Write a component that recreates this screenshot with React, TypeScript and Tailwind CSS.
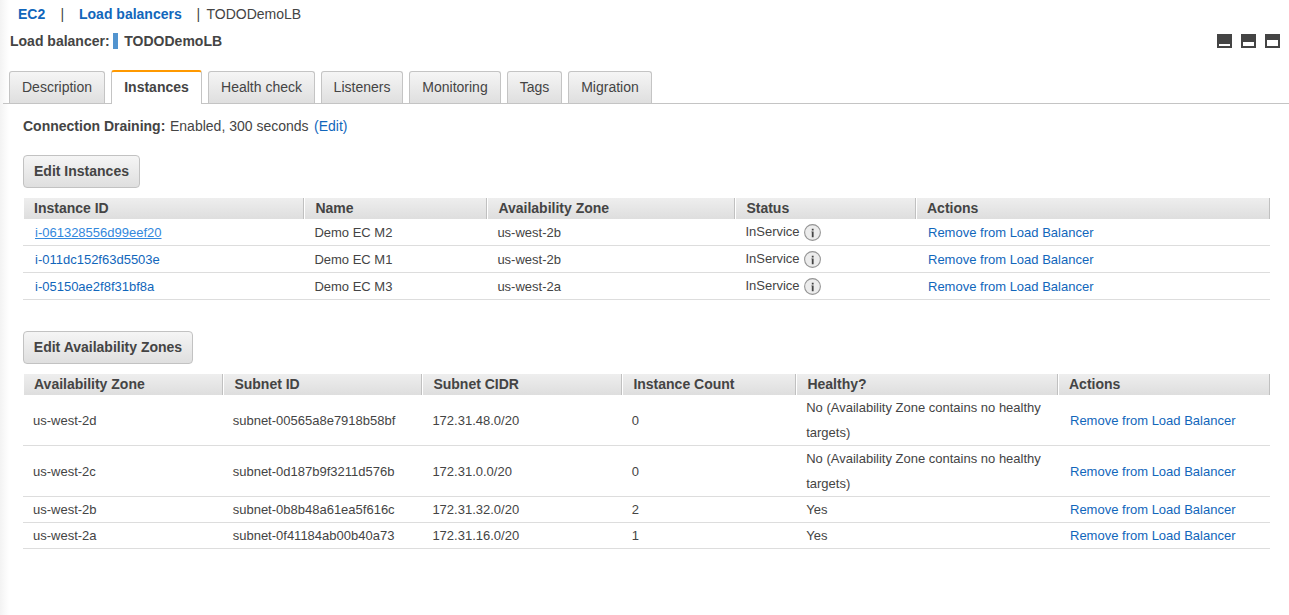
import type { ReactNode } from 'react';

const tabs = [
  { label: 'Description', width: 'w-[96px]' },
  { label: 'Instances', width: 'w-[91px]' },
  { label: 'Health check', width: 'w-[107px]' },
  { label: 'Listeners', width: 'w-[82px]' },
  { label: 'Monitoring', width: 'w-[92px]' },
  { label: 'Tags', width: 'w-[55px]' },
  { label: 'Migration', width: 'w-[84px]' },
];

const instances = [
  { id: 'i-061328556d99eef20', name: 'Demo EC M2', zone: 'us-west-2b', hovered: true },
  { id: 'i-011dc152f63d5503e', name: 'Demo EC M1', zone: 'us-west-2b', hovered: false },
  { id: 'i-05150ae2f8f31bf8a', name: 'Demo EC M3', zone: 'us-west-2a', hovered: false },
];

const unhealthy = 'No (Availability Zone contains no healthy targets)';

const zones = [
  { zone: 'us-west-2d', subnet: 'subnet-00565a8e7918b58bf', cidr: '172.31.48.0/20', count: 0, healthy: unhealthy },
  { zone: 'us-west-2c', subnet: 'subnet-0d187b9f3211d576b', cidr: '172.31.0.0/20', count: 0, healthy: unhealthy },
  { zone: 'us-west-2b', subnet: 'subnet-0b8b48a61ea5f616c', cidr: '172.31.32.0/20', count: 2, healthy: 'Yes' },
  { zone: 'us-west-2a', subnet: 'subnet-0f41184ab00b40a73', cidr: '172.31.16.0/20', count: 1, healthy: 'Yes' },
];

const instanceGrid = 'grid grid-cols-[281px_183px_248px_181px_354px]';
const zoneGrid = 'grid grid-cols-[200px_199px_200px_174px_262px_212px]';

function HeaderRow({ grid, labels }: { grid: string; labels: string[] }) {
  return (
    <div className={`${grid} h-[21px] text-sm leading-[21px] font-bold`}>
      {labels.map((label) => (
        <div
          key={label}
          className="border-r border-l border-r-[#c0c0c0] border-l-white bg-linear-to-b from-[#eeeeee] to-[#dedede] pl-[10.4px] first:pl-[10px] last:pl-[10px]"
        >
          {label}
        </div>
      ))}
    </div>
  );
}

function GreyButton({ children, width }: { children: ReactNode; width: string }) {
  return (
    <button
      className={`${width} block h-[33px] rounded-[4px] border border-[#c2c2c2] bg-linear-to-b from-[#f5f5f5] to-[#dfdfdf] pb-px text-center text-sm font-bold whitespace-nowrap`}
    >
      {children}
    </button>
  );
}

function PaneIcon({ top, height }: { top: number; height: number }) {
  return (
    <svg width="15" height="14" viewBox="0 0 15 14" shapeRendering="crispEdges">
      <rect width="15" height="14" fill="#444" />
      <rect x="2" y={top} width="11" height={height} fill="#fff" />
    </svg>
  );
}

function InfoIcon() {
  return (
    <svg width="18" height="18" viewBox="0 0 18 18">
      <circle cx="8.5" cy="8.5" r="7.9" fill="#ececec" stroke="#959595" strokeWidth="1.1" />
      <path d="M7.8 4.8h1.8v1.8H7.8zM7.8 7.5h1.8v5.8H7.8z" fill="#444" />
      <path d="M7 7.5h.8v.8H7z" fill="#888" />
    </svg>
  );
}

function RemoveLink() {
  return (
    <a href="#" className="text-[#1166bb]">
      Remove from Load Balancer
    </a>
  );
}

export default function App() {
  return (
    <div className="flex h-[615px] w-[1289px] overflow-hidden bg-white font-['Liberation_Sans',Arial,sans-serif] text-sm text-[#444]">
      <div className="w-[9px] shrink-0 bg-linear-to-r from-[#f3f3f3] to-white" />
      <div className="-ml-[6px] flex-1">
        <div className="flex h-[28px] items-center pl-[15px] whitespace-pre">
          <a href="#" className="w-[42.5px] font-bold text-[#1166bb]">EC2</a>
          <span className="w-[18.5px]">|</span>
          <a href="#" className="w-[117.4px] font-bold text-[#1166bb]">Load balancers</a>
          <span className="w-[10.1px]">|</span>
          <span>TODODemoLB</span>
        </div>

        <div className="flex h-[26px] items-center pr-[9px] pl-[7px] font-bold">
          <span className="w-[103px]">Load balancer:</span>
          <span className="mr-[6.3px] h-[16px] w-[5px] bg-[#5294cf]" />
          <span>TODODemoLB</span>
          <div className="ml-auto flex gap-[9px]">
            <PaneIcon top={10} height={2} />
            <PaneIcon top={8} height={4} />
            <PaneIcon top={6} height={6} />
          </div>
        </div>

        <div className="mt-[16px] flex h-[34px] items-end gap-[6px] border-b border-[#c4c4c4] pl-[6px]">
          {tabs.map(({ label, width }) =>
            label === 'Instances' ? (
              <div
                key={label}
                className={`${width} -mb-px h-[34px] shrink-0 rounded-t-[3px] border-x border-t-2 border-x-[#c4c4c4] border-t-[#ff9900] bg-white text-center leading-[31px] font-bold`}
              >
                {label}
              </div>
            ) : (
              <div
                key={label}
                className={`${width} h-[32px] shrink-0 rounded-t-[3px] border-x border-t border-[#c4c4c4] bg-linear-to-b from-[#f5f5f5] to-[#dfdfdf] text-center leading-[31px]`}
              >
                {label}
              </div>
            ),
          )}
        </div>

        <div className="mr-[19px] ml-[20px]">
          <div className="flex h-[51px] pt-[14px] leading-[17px]">
            <span className="w-[147px] font-bold">Connection Draining:</span>
            <span>Enabled, 300 seconds</span>
            <a href="#" className="ml-[5.5px] text-[#1166bb]">(Edit)</a>
          </div>

          <GreyButton width="w-[117px]">Edit Instances</GreyButton>
          <div className="mt-[10px] text-[13px]">
            <HeaderRow grid={instanceGrid} labels={['Instance ID', 'Name', 'Availability Zone', 'Status', 'Actions']} />
            {instances.map(({ id, name, zone, hovered }) => (
              <div key={id} className={`${instanceGrid} h-[27px] border-b border-[#dddddd] leading-[28px]`}>
                <div className="pl-[12px]">
                  <a href="#" className={hovered ? 'text-[#3388dd] underline' : 'text-[#1166bb]'}>{id}</a>
                </div>
                <div className="pl-[10.4px]">{name}</div>
                <div className="pl-[10.4px]">{zone}</div>
                <div className="flex h-[26px] items-start gap-[4px] pl-[10.4px]">
                  <span className="leading-[26px]">InService</span>
                  <span className="pt-[5px]">
                    <InfoIcon />
                  </span>
                </div>
                <div className="pl-[12px]"><RemoveLink /></div>
              </div>
            ))}
          </div>

          <div className="h-[31px]" />
          <GreyButton width="w-[170px]">Edit Availability Zones</GreyButton>
          <div className="mt-[10px] text-[13px]">
            <HeaderRow
              grid={zoneGrid}
              labels={['Availability Zone', 'Subnet ID', 'Subnet CIDR', 'Instance Count', 'Healthy?', 'Actions']}
            />
            {zones.map(({ zone, subnet, cidr, count, healthy }) => (
              <div key={zone} className={`${zoneGrid} items-center border-b border-[#dddddd] leading-[25px]`}>
                <div className="pl-[10px]">{zone}</div>
                <div className="pl-[9.7px]">{subnet}</div>
                <div className="pl-[10.4px]">{cidr}</div>
                <div className="pl-[9.7px]">{count}</div>
                <div className="pr-[10px] pl-[10.2px]">{healthy}</div>
                <div className="pl-[12px]"><RemoveLink /></div>
              </div>
            ))}
          </div>
        </div>
      </div>
    </div>
  );
}
